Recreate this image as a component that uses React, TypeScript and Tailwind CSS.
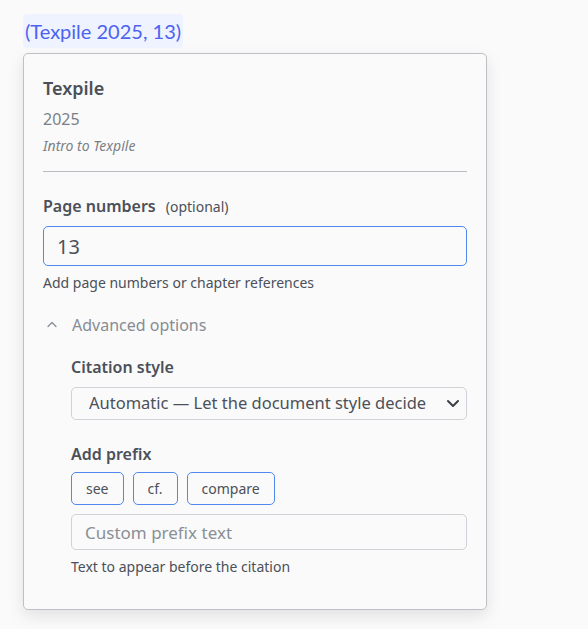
import { useState } from "react";

function ChevronUp() {
    return (
        <svg width="12" height="12" viewBox="0 0 12 12" fill="none" stroke="currentColor" strokeWidth="1.3" strokeLinecap="round" strokeLinejoin="round">
            <path d="M2 7.5 6 3.5l4 4" />
        </svg>
    );
}

function ChevronDown() {
    return (
        <svg width="16" height="16" viewBox="0 0 16 16" fill="none" stroke="currentColor" strokeWidth="2" strokeLinecap="round" strokeLinejoin="round">
            <path d="M3 6l5 5 5-5" />
        </svg>
    );
}

export default function App() {
    const [pages, setPages] = useState("13");
    const [prefix, setPrefix] = useState("");

    return (
        <div className="min-h-[629px] bg-[#fafafa] pt-[14px] pl-[23px]" style={{ fontFamily: '"Noto Sans", "Open Sans", sans-serif' }}>
            <span
                className="inline-block rounded-[4px] bg-[#eef3ff] px-[2px] h-[34px] leading-[34px] text-[20px] text-[#4d62f0]"
                style={{ fontFamily: 'Lato, "Noto Sans", sans-serif' }}
            >
                (Texpile 2025, 13)
            </span>

            <div className="mt-[5px] w-[464px] h-[557px] rounded-[5px] border border-[#bdc1c6] bg-[#fafafa] px-[19px] pt-[17px] shadow-[0_6px_16px_rgba(0,0,0,0.10)]">
                <div className="text-[18px] font-semibold leading-[34px] text-[#4b5059]">Texpile</div>
                <div className="text-[16px] leading-[28px] text-[#7a7f87]">2025</div>
                <div className="text-[14px] italic leading-[26px] text-[#7a7f87]">Intro to Texpile</div>
                <div className="mt-[12px] h-px bg-[#b8bbbf]" />

                <div className="mt-[22px] flex items-baseline gap-[10px]">
                    <span className="text-[16px] font-semibold text-[#4b5059]">Page numbers</span>
                    <span className="text-[14px] text-[#4b5059]">(optional)</span>
                </div>
                <input
                    value={pages}
                    onChange={(e) => setPages(e.target.value)}
                    className="mt-[8px] block h-[40px] w-full rounded-[5px] border border-[#5088ec] bg-[#fafafa] px-[13px] text-[20px] text-[#4b5059] outline-none"
                />
                <div className="mt-[6px] text-[14px] text-[#4b5059]">Add page numbers or chapter references</div>

                <div className="mt-[20px] flex items-center gap-[14px] pl-[3px] text-[16px] text-[#878c94]">
                    <ChevronUp />
                    <span>Advanced options</span>
                </div>

                <div className="mt-[18px] pl-[28px]">
                    <div className="text-[16px] font-semibold text-[#4b5059]">Citation style</div>
                    <div className="relative mt-[8px]">
                        <select className="block h-[33px] w-full appearance-none rounded-[5px] border border-[#cfd2d6] bg-[#fafafa] pl-[17px] pr-[36px] text-[16.5px] text-[#4b5059] outline-none">
                            <option>Automatic — Let the document style decide</option>
                        </select>
                        <span className="pointer-events-none absolute right-[6px] top-[8px] text-[#3c4046]">
                            <ChevronDown />
                        </span>
                    </div>

                    <div className="mt-[22px] text-[16px] font-semibold text-[#4b5059]">Add prefix</div>
                    <div className="mt-[6px] flex gap-[9px]">
                        {["see", "cf.", "compare"].map((p) => (
                            <button
                                key={p}
                                onClick={() => setPrefix(p)}
                                className="h-[33px] rounded-[5px] border border-[#5088ec] bg-[#fafafa] px-[14px] text-[14px] text-[#4b5059]"
                            >
                                {p}
                            </button>
                        ))}
                    </div>
                    <input
                        value={prefix}
                        onChange={(e) => setPrefix(e.target.value)}
                        placeholder="Custom prefix text"
                        className="mt-[9px] block h-[36px] w-full rounded-[5px] border border-[#cfd2d6] bg-[#fafafa] px-[13px] text-[17px] text-[#4b5059] outline-none placeholder:text-[#8a8f96]"
                    />
                    <div className="mt-[6px] text-[14px] text-[#4b5059]">Text to appear before the citation</div>
                </div>
            </div>
        </div>
    );
}
